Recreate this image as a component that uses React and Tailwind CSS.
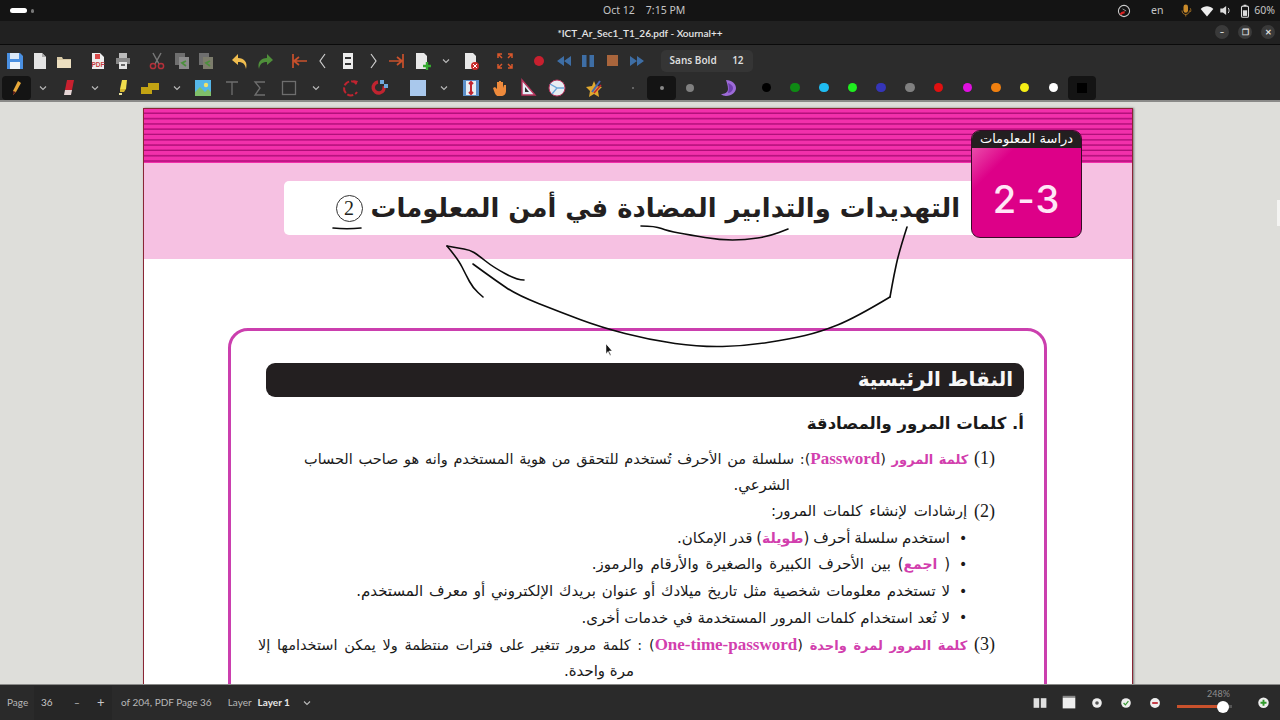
import React from "react";

const S = ({ children, s = 20, v = 20, className = "" }) => (
  <svg width={s} height={s} viewBox={`0 0 ${v} ${v}`} className={className} fill="none">{children}</svg>
);

const Save = () => <S><path d="M2 2h13l3 3v13H2z" fill="#4a90e2" /><rect x="5" y="2" width="9" height="6" fill="#dbe9f8" /><rect x="5" y="11" width="10" height="7" fill="#eef4fb" /></S>;
const NewDoc = () => <S><path d="M4 2h8l4 4v12H4z" fill="#e4e4e4" /><path d="M12 2l4 4h-4z" fill="#aaa" /></S>;
const Open = () => <S><path d="M3 6h5l1 2h8v9H3z" fill="#d8c9a6" /><rect x="3" y="9" width="14" height="8" fill="#ecdfc0" /></S>;
const Pdf = () => <S><path d="M4 2h8l4 4v12H4z" fill="#eee" /><rect x="7" y="3" width="5" height="5" fill="#d94b4b" /><text x="10" y="16" textAnchor="middle" fontSize="6.5" fontWeight="700" fill="#c43c3c" fontFamily="Liberation Sans">PDF</text></S>;
const Print = () => <S><rect x="6" y="2" width="8" height="5" fill="#bbb" /><rect x="3" y="7" width="14" height="6" fill="#888" /><rect x="6" y="11" width="8" height="7" fill="#e4e4e4" /><rect x="8" y="13" width="4" height="2" fill="#666" /></S>;
const Cut = () => <S><path d="M6 2l6 11M14 2L8 13" stroke="#777" strokeWidth="1.5" /><circle cx="6" cy="15" r="2.6" stroke="#b5303a" strokeWidth="1.5" /><circle cx="14" cy="15" r="2.6" stroke="#b5303a" strokeWidth="1.5" /></S>;
const Copy = ({ c = "#8c8c8c" }) => <S><rect x="3" y="2" width="10" height="12" fill="#6f6f6f" /><rect x="7" y="6" width="10" height="12" fill={c} /><path d="M14 10l-4 2 4 3" stroke="#4c8f3d" strokeWidth="1.8" /></S>;
const Undo = () => <S><path d="M8 3L2 9l6 5v-3c4 0 7 1 8 7 2-7-2-11-8-11z" fill="#f0bd4f" /></S>;
const Redo = () => <S><path d="M12 3l6 6-6 5v-3c-4 0-7 1-8 7-2-7 2-11 8-11z" fill="#4f8f3a" /></S>;
const First = () => <S><path d="M4 3v14M5 10h13M5 10l5-4M5 10l5 4" stroke="#c9512c" strokeWidth="1.7" /></S>;
const Last = () => <S><path d="M16 3v14M2 10h13M15 10l-5-4M15 10l-5 4" stroke="#c9512c" strokeWidth="1.7" /></S>;
const Prev = () => <S><path d="M12 3l-5 7 5 7" stroke="#cfcfcf" strokeWidth="1.2" /></S>;
const Next = () => <S><path d="M8 3l5 7-5 7" stroke="#cfcfcf" strokeWidth="1.2" /></S>;
const PageI = () => <S><rect x="5" y="2" width="10" height="16" fill="#ececec" /><path d="M7 7h6M7 13h6" stroke="#333" strokeWidth="2" /></S>;
const AddP = () => <S><path d="M4 2h8l3 3v13H4z" fill="#e8e8e8" /><path d="M15 11v8M11 15h8" stroke="#35a92f" strokeWidth="2.4" /></S>;
const DelP = () => <S><path d="M4 2h8l3 3v13H4z" fill="#e8e8e8" /><circle cx="14" cy="15" r="4" fill="#c92a2a" /><path d="M12 13l4 4M16 13l-4 4" stroke="#fff" /></S>;
const Chev = () => <S s={12} v={12}><path d="M3 4.5L6 7.5 9 4.5" stroke="#bbb" strokeWidth="1.1" /></S>;
const Full = () => <S><path d="M3 7V3h4M17 7V3h-4M3 13v4h4M17 13v4h-4M3 3l4 4M17 3l-4 4M3 17l4-4M17 17l-4-4" stroke="#d9572b" strokeWidth="1.5" /></S>;
const Rec = () => <S><circle cx="10" cy="10" r="5" fill="#c8202f" /></S>;
const Rew = () => <S><path d="M10 5L3 10l7 5zM17 5l-7 5 7 5z" fill="#3e6ea5" /></S>;
const Ff = () => <S><path d="M3 5l7 5-7 5zM10 5l7 5-7 5z" fill="#3e6ea5" /></S>;
const Pause = () => <S><rect x="4" y="4" width="4.5" height="12" fill="#3e6ea5" /><rect x="11.5" y="4" width="4.5" height="12" fill="#3e6ea5" /></S>;
const Stop = () => <S><rect x="4" y="4" width="11" height="11" fill="#a9653c" /></S>;
const Pen = () => <S><path d="M12 3l3 2-5 9-3 3 0-4z" fill="#e8a93a" /><path d="M7 13l3 1-3 3z" fill="#5a1c1c" /></S>;
const Eraser = () => <S><path d="M8 2h7l-2 10H6z" fill="#c8202f" /><path d="M6 12h7l-1 5H5z" fill="#e6d6d6" /></S>;
const Hl = () => <S><path d="M10 2h5l-1 9H8z" fill="#f1de4c" /><path d="M8 11h6l-2 3H8z" fill="#d6b82f" /><path d="M7 15h3v2H7z" fill="#e9e29a" /></S>;
const Sel = () => <S><path d="M1 9h7V5h11v7h-7v4H1z" fill="#c2a313" /></S>;
const Img = () => <S><rect x="2" y="2" width="16" height="16" fill="#55b6e8" /><circle cx="13" cy="7" r="2.2" fill="#f4e26a" /><path d="M2 14l5-5 5 5 3-3 3 3v4H2z" fill="#7fc06a" /></S>;
const TextI = () => <S><path d="M4 4h12M10 4v13" stroke="#6e6e6e" strokeWidth="1.3" /></S>;
const Sigma = () => <S><path d="M15 4H5l5 6-5 7h10" stroke="#6e6e6e" strokeWidth="1.3" /></S>;
const Rect = () => <S><rect x="3.5" y="3.5" width="13" height="13" stroke="#6e6e6e" strokeWidth="1.3" /></S>;
const Rot = () => <S><path d="M15.5 6A7 7 0 1 0 16 14" stroke="#c02430" strokeWidth="2" strokeDasharray="6 2" /><path d="M12 2l5 1-2 4z" fill="#c02430" /></S>;
const Mag = () => <S><path d="M14 8a5.500 5.500 0 1 1-6-4" stroke="#c02430" strokeWidth="3.400" /><rect x="10" y="2" width="4" height="4" fill="#6fa8dc" /><rect x="14" y="6" width="4" height="4" fill="#6fa8dc" /></S>;
const Blue = () => <S><rect x="2" y="2" width="16" height="16" fill="#a9c8ec" /></S>;
const Vert = () => <S><rect x="2" y="2" width="16" height="16" fill="#5b8fc9" /><rect x="5" y="3" width="10" height="14" fill="#e8edf3" /><path d="M10 4v12M8 6l2-2 2 2M8 14l2 2 2-2" stroke="#c02430" strokeWidth="2" /></S>;
const Hand = () => <S><path d="M4 10l2-1 2 2V4h2v5V3h2v6V4h2v6l1-3h2v6c0 3-2 5-5 5H9c-2 0-3-2-5-8z" fill="#ee8a3c" /></S>;
const Sq = () => <S><path d="M4 2l13 15H4z" fill="#e5ecf5" stroke="#b9345d" strokeWidth="1.400" /><path d="M7 9l4 5H7z" fill="#2c2c2c" /></S>;
const Comp = () => <S><circle cx="10" cy="10" r="8" fill="#e8edf3" stroke="#b9345d" strokeWidth="1" /><path d="M10 10l7 0M3 6l7 4-5 6" stroke="#6fa8dc" strokeWidth="1.400" /></S>;
const Star = () => <S><path d="M9 3l2 5 6 1-4 4 1 6-5-3-5 3 1-6-4-4 6-1z" fill="#e0a82e" /><path d="M7 14L15 3" stroke="#4a67b0" strokeWidth="2" /><path d="M9 15l7-8" stroke="#c02430" strokeWidth="1.500" /></S>;
const Moon = () => <S><path d="M8 2c6 0 10 4 10 8s-4 8-10 8c-2 0-4-1-5-2 3 0 7-1 7-5 0-3-1-6-2-9z" fill="#9d6bd8" /><path d="M10 5c3 1 5 3 5 5s-2 5-5 5c1-3 1-7 0-10z" fill="#6f3fb0" /></S>;

const Slot = ({ children }) => <div className="w-[24.600px] h-[24px] flex items-center justify-center shrink-0">{children}</div>;
const Slot2 = ({ children, active }) => (
  <div className={`w-[28.700px] h-[24px] flex items-center justify-center shrink-0 ${active ? "bg-[#141414] rounded-[4px]" : ""}`}>{children}</div>
);
const ChevS = () => <div className="w-[24px] h-[24px] flex items-center justify-center shrink-0"><Chev /></div>;
const Sep = () => <div className="w-[9.400px] shrink-0" />;
const Dot = ({ c }) => <div className="w-[9.500px] h-[9.500px] rounded-full" style={{ background: c }} />;

const Colors = ["#000000", "#0f8a14", "#1fbcf2", "#1fee1f", "#3535b8", "#808080", "#e01010", "#e010e0", "#f08010", "#f5ee15", "#ffffff"];

const smooth = (pts) => {
  let d = `M${pts[0][0]} ${pts[0][1]}`;
  for (let i = 1; i < pts.length - 1; i++) {
    const mx = (pts[i][0] + pts[i + 1][0]) / 2;
    const my = (pts[i][1] + pts[i + 1][1]) / 2;
    d += ` Q${pts[i][0]} ${pts[i][1]} ${mx} ${my}`;
  }
  const l = pts[pts.length - 1];
  return d + ` L${l[0]} ${l[1]}`;
};

const Ink = () => (
  <svg className="absolute left-0 top-0 pointer-events-none" width="1280" height="720" fill="none" stroke="#0c0c0c" strokeWidth="1.600" strokeLinecap="round" strokeLinejoin="round">
    <path d="M333 228c9 1 19 1 28 0" />
    <path d={smooth([[641, 226], [655, 226], [668, 231], [690, 235], [720, 240], [745, 240], [770, 236], [788, 229]])} />
    <path d={smooth([[907, 227], [899, 252], [894, 275], [890, 297]])} />
    <path d={smooth([[890, 297], [855, 318], [820, 332], [790, 339], [745, 346], [700, 347], [650, 340], [600, 327], [560, 312], [517, 295], [495, 280], [473, 264]])} />
    <path d={smooth([[524, 280], [517, 280], [493, 267], [478, 255], [470, 250], [458, 248], [447, 246]])} />
    <path d={smooth([[447, 246], [458, 259], [466, 275], [473, 288], [483, 297]])} />
    <path d="M606 344v10l2-2.500 2 4 1-.500-2-4h3z" fill="#111" stroke="#fff" strokeWidth="0.500" />
  </svg>
);

const Row = ({ className = "", children }) => (
  <div dir="rtl" className={`h-[26.600px] flex items-center whitespace-nowrap text-[15px] text-[#1a1a1a] font-['DejaVu_Sans','Liberation_Serif',serif] ${className}`}>{children}</div>
);
const P = ({ children, className = "text-[14px]" }) => <span className={`text-[#d23fae] font-bold ${className}`}>{children}</span>;
const E = ({ children }) => <span className="font-['Liberation_Serif',serif] text-[#d23fae] font-bold text-[17px]">{children}</span>;
const N = ({ children }) => <span className="font-['Liberation_Serif',serif] text-[18px]">{children}</span>;
const Bullet = ({ children, className = "" }) => (
  <Row className={`pr-[56px] ${className}`}>
    <span className="w-[10px] flex justify-center ml-[8px] text-[14px]">•</span>
    <span>{children}</span>
  </Row>
);

export default function App() {
  return (
    <div className="relative w-[1280px] h-[720px] overflow-hidden flex flex-col bg-[#dededa] font-['Noto_Sans',sans-serif]">
      {/* top bar */}
      <div className="h-[21px] shrink-0 bg-[#141414] flex items-center text-[10.500px] text-[#c4c4c4] pl-[10px] pr-[5px]">
        <div className="w-[20px] h-[5px] rounded-full bg-white" />
        <div className="w-[4px] h-[4px] rounded-full bg-[#777] ml-[4px]" />
        <div className="ml-[569px] flex gap-[11px] w-[110px]"><span>Oct 12</span><span>7:15 PM</span></div>
        <div className="ml-[422px] w-[14px] h-[14px]">
          <S s={14}><circle cx="10" cy="10" r="8" stroke="#ccc" strokeWidth="1.500" /><path d="M5 15a6 6 0 0 1 6-3" stroke="#d22" strokeWidth="3" /><path d="M8 7l5 3" stroke="#ccc" /></S>
        </div>
        <span className="ml-[20px] w-[29px]">en</span>
        <div className="ml-[4px]"><S s={15}><rect x="6" y="2" width="6" height="11" rx="3" fill="#c98a2a" /><path d="M4 10c0 7 10 7 10 0M9 15v3M15 7c1 2 1 4 0 5" stroke="#c98a2a" /></S></div>
        <div className="ml-[6px]"><S s={14}><path d="M1 7c5-5 13-5 18 0l-9 11z" fill="#eee" /></S></div>
        <div className="ml-[5px]"><S s={13}><path d="M2 7h4l5-4v14l-5-4H2z" fill="#ddd" /><path d="M14 6c2 2 2 6 0 8" stroke="#ddd" strokeWidth="1.500" /></S></div>
        <div className="ml-[6px]"><S s={14}><rect x="5" y="3" width="10" height="16" rx="2" stroke="#ddd" strokeWidth="1.500" /><rect x="7" y="9" width="6" height="8" fill="#ddd" /><rect x="8" y="1" width="4" height="2" fill="#ddd" /></S></div>
        <span className="ml-[2px]">60%</span>
      </div>
      {/* title bar */}
      <div className="relative h-[24px] shrink-0 bg-[#212121] border-b border-[#0a0a0a] flex items-center justify-center pt-[1px] text-[10px] font-['Lato',sans-serif] font-semibold text-[#e6e6e6]">
        <span>*ICT_Ar_Sec1_T1_26.pdf - Xournal++</span>
        <div className="absolute right-[5px] top-[4px] flex gap-[9px] font-['Noto_Sans',sans-serif]">
          {["–", "❐", "✕"].map((c) => (
            <div key={c} className="w-[14px] h-[14px] rounded-full bg-[#3a3a3a] flex items-center justify-center text-[8px] text-[#ddd]">{c}</div>
          ))}
        </div>
      </div>
      {/* toolbar 1 */}
      <div className="h-[28px] shrink-0 bg-[#2c2c2c] flex items-center pl-[3px] pt-[3px]">
        <Slot><Save /></Slot><Slot><NewDoc /></Slot><Slot><Open /></Slot><Sep />
        <Slot><Pdf /></Slot><Slot><Print /></Slot><Sep />
        <Slot><Cut /></Slot><Slot><Copy /></Slot><Slot><Copy c="#7d7d6c" /></Slot><Sep />
        <Slot><Undo /></Slot><Slot><Redo /></Slot><Sep />
        <Slot><First /></Slot><Slot><Prev /></Slot><Slot><PageI /></Slot><Slot><Next /></Slot><Slot><Last /></Slot><Slot><AddP /></Slot><Slot><Chev /></Slot><Slot><DelP /></Slot><Sep />
        <Slot><Full /></Slot><Sep />
        <Slot><Rec /></Slot><Slot><Rew /></Slot><Slot><Pause /></Slot><Slot><Stop /></Slot><Slot><Ff /></Slot>
        <div className="ml-[11px] w-[92px] h-[22px] rounded-[5px] bg-[#353535] flex items-center justify-between px-[9px] text-[10px] font-semibold text-[#dcdcdc]">
          <span>Sans Bold</span><span>12</span>
        </div>
      </div>
      {/* toolbar 2 */}
      <div className="h-[29px] shrink-0 bg-[#2c2c2c] flex items-center pl-[2px] pt-[2px] border-b-2 border-[#8a8a88]">
        <Slot2 active><Pen /></Slot2><ChevS /><Slot2><Eraser /></Slot2><ChevS /><Slot2><Hl /></Slot2><Slot2><Sel /></Slot2><ChevS />
        <Slot2><Img /></Slot2><Slot2><TextI /></Slot2><Slot2><Sigma /></Slot2><Slot2><Rect /></Slot2><ChevS /><Sep />
        <Slot2><Rot /></Slot2><Slot2><Mag /></Slot2><Sep />
        <Slot2><Blue /></Slot2><ChevS /><Slot2><Vert /></Slot2><Slot2><Hand /></Slot2><Slot2><Sq /></Slot2><Slot2><Comp /></Slot2><Sep />
        <Slot2><Star /></Slot2><Sep />
        <Slot2><div className="w-[2px] h-[2px] rounded-full bg-[#777]" /></Slot2>
        <Slot2 active><div className="w-[4px] h-[4px] rounded-full bg-[#888]" /></Slot2>
        <Slot2><div className="w-[8px] h-[8px] rounded-full bg-[#808080]" /></Slot2><Sep />
        <Slot2><Moon /></Slot2><Sep />
        {Colors.map((c) => <Slot2 key={c}><Dot c={c} /></Slot2>)}
        <Slot2 active><div className="w-[10px] h-[10px] bg-black" /></Slot2>
      </div>
      {/* main */}
      <div className="relative flex-1 min-h-0 overflow-hidden flex justify-center pt-[6px]">
        <div className="absolute right-0 top-[98px] w-[3px] h-[26px] bg-[#f4f4f2]" />
        <div className="relative w-[990px] ml-[-4px] h-[800px] bg-white border border-[#8a2535] shadow-[1px_0_2px_#777] shrink-0">
          <div className="h-[54px] bg-[repeating-linear-gradient(180deg,#f230ab_0,#f230ab_3px,#cc1a8c_3.600px,#ae0f78_4.400px,#d8249a_5.300px)]" />
          <div className="h-[96px] bg-[#f6c1e2] pl-[140px] pt-[18px]">
            <div dir="rtl" className="w-[700px] h-[54px] rounded-[5px] bg-white flex items-center pr-[24px] font-['DejaVu_Sans',sans-serif] font-bold text-[25.800px] text-[#231f20] whitespace-nowrap">
              <span>التهديدات والتدابير المضادة في أمن المعلومات</span>
              <span className="mr-[8px] w-[27px] h-[27px] rounded-full border border-[#333] flex items-center justify-center font-['Liberation_Serif',serif] font-normal text-[20px]">2</span>
            </div>
          </div>
          {/* badge */}
          <div className="absolute left-[827px] top-[21px] w-[111px] h-[108px] rounded-[9px] overflow-hidden border border-[#3a0a28] bg-[linear-gradient(135deg,#f06ab8_0%,#dd0088_28%,#dd0088_100%)] flex flex-col">
            <div dir="rtl" className="h-[17px] bg-[#231f20] flex items-center justify-center pb-[1px] text-white text-[13px] font-['DejaVu_Sans',sans-serif]">دراسة المعلومات</div>
            <div className="flex-1 flex items-center justify-center pt-[14px] text-[#ffe6f6] text-[38px] font-['Inter',sans-serif] font-medium tracking-[1px]">2-3</div>
          </div>
          {/* content box */}
          <div className="ml-[84px] mt-[69px] w-[819px] h-[500px] border-[3px] border-[#cb3fae] rounded-[20px] pl-[35px] pr-[20px] pt-[32px]">
            <div dir="rtl" className="h-[34px] rounded-[9px] bg-[#231f20] flex items-center pr-[11px] pb-[2px] text-[#f7f7f7] font-['DejaVu_Sans',sans-serif] font-bold text-[20px]">النقاط الرئيسية</div>
            <div dir="rtl" className="h-[34px] mt-[10px] mb-[4px] flex items-center font-['DejaVu_Sans',sans-serif] font-bold text-[16.500px] text-[#1a1a1a]">أ. كلمات المرور والمصادقة</div>
            <Row className="pr-[29px]">
              <div className="w-[691px] shrink-0 text-[14.500px] [text-align-last:justify]"><N>(1)</N> <P className="text-[13px]">كلمة المرور</P> (<E>Password</E>): سلسلة من الأحرف تُستخدم للتحقق من هوية المستخدم وانه هو صاحب الحساب</div>
            </Row>
            <Row className="pr-[234px]">الشرعي.</Row>
            <Row className="pr-[29px] [word-spacing:2px]"><N>(2)</N>&nbsp;إرشادات لإنشاء كلمات المرور:</Row>
            <Bullet className="[word-spacing:-1px]">استخدم سلسلة أحرف (<P>طويلة</P>) قدر الإمكان.</Bullet>
            <Bullet className="[word-spacing:2px]">( <P>اجمع</P>) بين الأحرف الكبيرة والصغيرة والأرقام والرموز.</Bullet>
            <Bullet className="[word-spacing:1px]">لا تستخدم معلومات شخصية مثل تاريخ ميلادك أو عنوان بريدك الإلكتروني أو معرف المستخدم.</Bullet>
            <Bullet>لا تُعد استخدام كلمات المرور المستخدمة في خدمات أخرى.</Bullet>
            <Row className="pr-[29px]">
              <div className="w-[737px] shrink-0 text-[14.500px] [text-align-last:justify]"><N>(3)</N> <P className="text-[13px]">كلمة المرور لمرة واحدة</P> (<E>One-time-password</E>) : كلمة مرور تتغير على فترات منتظمة ولا يمكن استخدامها إلا</div>
            </Row>
            <Row className="pr-[390px]">مرة واحدة.</Row>
          </div>
        </div>
      </div>
      {/* bottom bar */}
      <div className="h-[36px] shrink-0 bg-[#2a2a2a] border-t border-[#8a8a88] flex items-center text-[10px] font-['Lato',sans-serif] text-[#b8b8b8] pl-[7px]">
        <span className="w-[27px]">Page</span>
        <div className="w-[78px] h-[34px] bg-[#262626] flex items-center pl-[7px] text-[#c8c8c8]">
          <span className="w-[33px]">36</span><span className="w-[23px]">–</span><span className="text-[13px]">+</span>
        </div>
        <span className="ml-[9px]">of 204, PDF Page 36</span>
        <span className="ml-[16px]">Layer</span>
        <span className="ml-[6px] font-bold text-[#e6e6e6]">Layer 1</span>
        <span className="ml-[11px]"><Chev /></span>
        <div className="ml-auto flex items-center pr-[5px]">
          <div className="w-[28.700px] flex justify-center"><S s={16}><rect x="2" y="4" width="7" height="12" fill="#e0e0e0" /><rect x="11" y="4" width="7" height="12" fill="#e0e0e0" /></S></div>
          <div className="w-[28.700px] flex justify-center"><S s={18}><rect x="3" y="2" width="14" height="2" fill="#888" /><rect x="3" y="4" width="14" height="12" fill="#eee" /></S></div>
          <div className="w-[28.700px] flex justify-center"><S s={12}><circle cx="10" cy="10" r="8" fill="#eee" /><circle cx="10" cy="10" r="3" fill="#555" /></S></div>
          <div className="w-[28.700px] flex justify-center"><S s={12}><circle cx="10" cy="10" r="8" fill="#eee" /><path d="M6 10l3 3 5-6" stroke="#3a9a35" strokeWidth="2" /></S></div>
          <div className="w-[28.700px] flex justify-center"><S s={14}><circle cx="10" cy="10" r="7" fill="#eee" /><path d="M6 10h8" stroke="#c02430" strokeWidth="2.500" /></S></div>
          <div className="relative w-[82px] h-[28px] flex items-center">
            <span className="absolute top-[-2px] left-[38px] text-[9px] text-[#8f8f8f]">248%</span>
            <div className="absolute left-[8px] top-[16px] w-[46px] h-[3px] bg-[#c9512c]" />
            <div className="absolute left-[54px] top-[16px] w-[9px] h-[3px] bg-[#555]" />
            <div className="absolute left-[48px] top-[12px] w-[12px] h-[12px] rounded-full bg-white" />
          </div>
          <div className="w-[24px] flex justify-center mt-[2px]"><S s={15}><circle cx="10" cy="9" r="7" fill="#eee" /><path d="M6 9h8M10 5v8" stroke="#2f9a2a" strokeWidth="2.500" /></S></div>
        </div>
      </div>
      <Ink />
    </div>
  );
}
